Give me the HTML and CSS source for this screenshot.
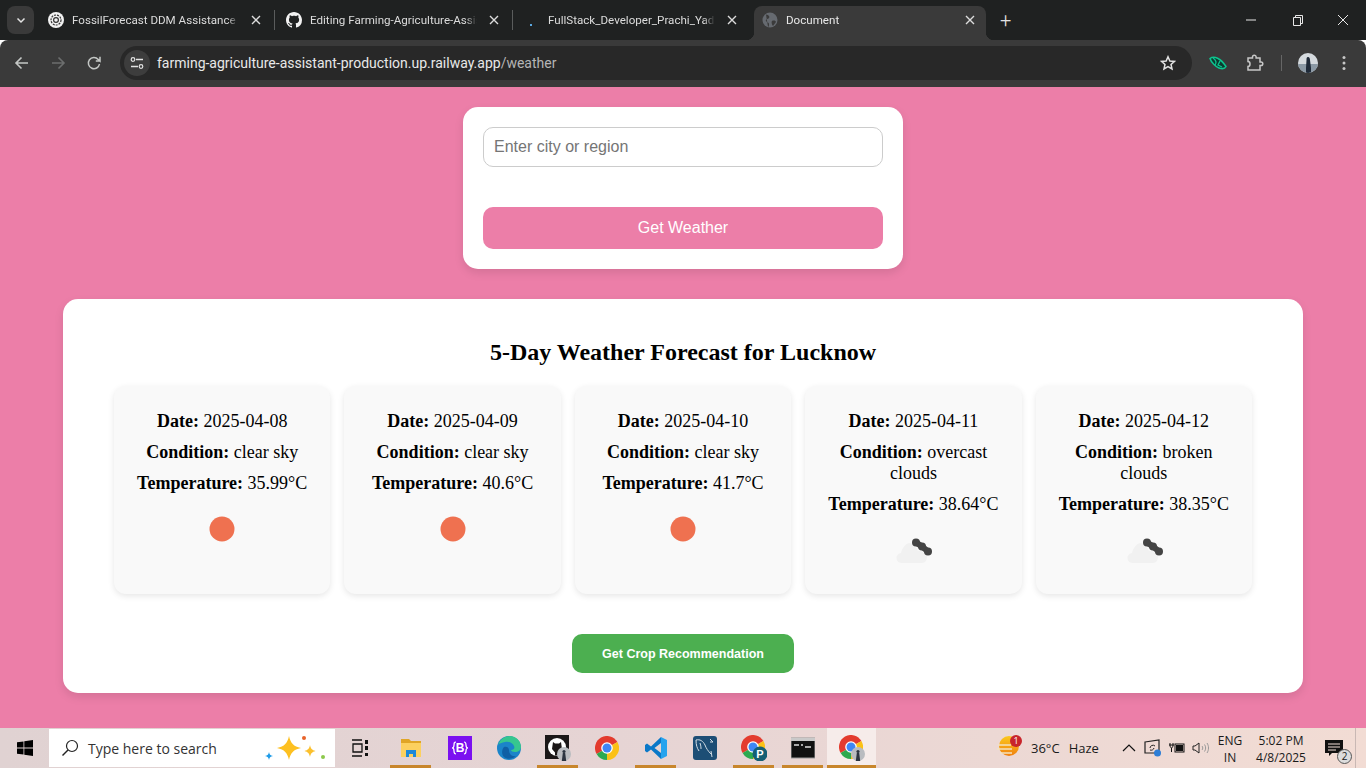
FILE: index.html
```html
<!DOCTYPE html>
<html lang="en">
<head>
    <meta charset="UTF-8">
    <title>Document</title>
    <link rel="stylesheet" href="styles.css">
</head>
<body>
<svg class="defs" width="0" height="0">
    <symbol id="chrome-logo" viewBox="0 0 24 24">
        <path d="M12 12 22.400 6A12 12 0 0 0 1.600 18z" fill="#e33b2e"/>
        <path d="M12 12 1.600 18A12 12 0 0 0 12 24z" fill="#2da94f"/>
        <path d="M12 12V24A12 12 0 0 0 22.400 6z" fill="#fbc116"/>
        <circle cx="12" cy="12" r="5.800" fill="#fff"/>
        <circle cx="12" cy="12" r="4.500" fill="#3f86f4"/>
    </symbol>
    <symbol id="lock-badge" viewBox="0 0 14 14">
        <circle cx="7" cy="7" r="7" fill="#b9bcc0"/>
        <circle cx="7" cy="4.500" r="1.600" fill="#2b3440"/>
        <path d="M5.800 6h2.400l1 8H4.800z" fill="#2b3440"/>
    </symbol>
    <symbol id="close-x" viewBox="0 0 10 10">
        <path d="M1 1l8 8M9 1 1 9" stroke="#dcdcdc" stroke-width="1.400"/>
    </symbol>
    <symbol id="cloud-icon" viewBox="0 0 50 50">
        <path d="M14 38a5 5 0 0 1-1-10c1-5 5-10 9-10 3 0 6 4 8 8 5-1 9 2 9 6 0 3-2 6-5 6z" fill="#f1f1f1"/>
        <path d="M28 17.500 34 21.500 40 26.500" fill="none" stroke="#444" stroke-width="6"/>
        <circle cx="28" cy="17.500" r="4" fill="#444"/>
        <circle cx="34" cy="21.500" r="4" fill="#444"/>
        <circle cx="40" cy="26.500" r="4" fill="#444"/>
    </symbol>
</svg>
<div class="page">
    <!-- browser tabs -->
    <div class="tabstrip">
        <div class="tab-search"><svg width="10" height="10" viewBox="0 0 10 10"><path d="M1.500 3.500 5 7l3.500-3.500" fill="none" stroke="#e3e3e3" stroke-width="1.500"/></svg></div>
        <div class="tab">
            <svg class="favicon" width="16" height="16" viewBox="0 0 16 16"><circle cx="8" cy="8" r="8" fill="#f2f2f2"/><circle cx="8" cy="8" r="5" fill="none" stroke="#333" stroke-width="1.200" stroke-dasharray="2 1"/><circle cx="8" cy="8" r="2.400" fill="none" stroke="#333" stroke-width="1.200"/></svg>
            <span class="tab-title">FossilForecast DDM Assistance</span>
            <svg class="tab-close" width="10" height="10"><use href="#close-x"/></svg>
        </div>
        <div class="tab-sep"></div>
        <div class="tab">
            <svg class="favicon" width="16" height="16" viewBox="0 0 16 16"><path fill="#f2f2f2" d="M8 0C3.580 0 0 3.580 0 8c0 3.540 2.290 6.530 5.470 7.590.4.070.55-.17.55-.38 0-.19-.01-.82-.01-1.490-2.010.37-2.530-.49-2.690-.94-.09-.23-.48-.94-.82-1.130-.28-.15-.68-.52-.01-.53.63-.01 1.080.58 1.230.82.72 1.210 1.870.87 2.330.66.07-.52.28-.87.51-1.070-1.780-.2-3.640-.89-3.640-3.950 0-.87.31-1.590.82-2.150-.08-.2-.36-1.020.08-2.120 0 0 .67-.21 2.200.82.64-.18 1.320-.27 2-.27s1.360.09 2 .27c1.530-1.040 2.200-.82 2.200-.82.44 1.100.16 1.920.08 2.120.51.56.82 1.270.82 2.150 0 3.070-1.870 3.750-3.650 3.950.29.25.54.73.54 1.480 0 1.070-.01 1.930-.01 2.200 0 .21.15.46.55.38A8.010 8.010 0 0 0 16 8c0-4.420-3.580-8-8-8z"/></svg>
            <span class="tab-title">Editing Farming-Agriculture-Assistant</span>
            <svg class="tab-close" width="10" height="10"><use href="#close-x"/></svg>
        </div>
        <div class="tab-sep"></div>
        <div class="tab">
            <svg class="favicon" width="16" height="16" viewBox="0 0 16 16"><rect x="6" y="12" width="2" height="2" fill="#5aa7e0"/></svg>
            <span class="tab-title">FullStack_Developer_Prachi_Yadav</span>
            <svg class="tab-close" width="10" height="10"><use href="#close-x"/></svg>
        </div>
        <div class="tab tab-active">
            <svg class="favicon" width="16" height="16" viewBox="0 0 16 16"><circle cx="8" cy="8" r="7.500" fill="#666a70"/><path d="M4 2.500c3 .5 4 2 3 3.500S3 7 4 9s3 1 3 3 0 2-1 3M10 9c2-1 4 0 4 1l-3 4c-1-1-2-4-1-5z" fill="#3b3b3b"/></svg>
            <span class="tab-title">Document</span>
            <svg class="tab-close" width="10" height="10"><use href="#close-x"/></svg>
        </div>
        <span class="tab-new">+</span>
        <div class="win-controls">
            <svg width="46" height="40" viewBox="0 0 46 40"><path d="M18 20h10" stroke="#e8e8e8"/></svg>
            <svg width="46" height="40" viewBox="0 0 46 40"><path d="M19.500 17.500h7v8h-7zM21.500 17.500v-2h7v8h-2" fill="none" stroke="#e8e8e8"/></svg>
            <svg width="46" height="40" viewBox="0 0 46 40"><path d="M18 15l10 10M28 15 18 25" stroke="#e8e8e8"/></svg>
        </div>
    </div>

    <!-- browser toolbar -->
    <div class="toolbar">
        <svg class="nav-icon" width="16" height="16" viewBox="0 0 16 16"><path d="M14 8H2.500M7.500 2.500 2 8l5.500 5.500" fill="none" stroke="#c4c7c5" stroke-width="1.600"/></svg>
        <svg class="nav-icon" width="16" height="16" viewBox="0 0 16 16"><path d="M2 8h11.500M8.500 2.500 14 8l-5.500 5.500" fill="none" stroke="#6c6e6e" stroke-width="1.600"/></svg>
        <svg class="nav-icon" width="16" height="16" viewBox="0 0 16 16"><path d="M13.500 9a5.600 5.600 0 1 1-1.300-4.600L14 6V1.800M14 6H9.800" fill="none" stroke="#c4c7c5" stroke-width="1.500"/></svg>
        <div class="omnibox">
            <span class="site-btn"><svg width="14" height="14" viewBox="0 0 14 14"><path d="M6 3.500h7M1 10.500h7" stroke="#e3e3e3" stroke-width="1.300"/><circle cx="3" cy="3.500" r="1.800" fill="none" stroke="#e3e3e3" stroke-width="1.200"/><circle cx="11" cy="10.500" r="1.800" fill="none" stroke="#e3e3e3" stroke-width="1.200"/></svg></span>
            <span class="url">farming-agriculture-assistant-production.up.railway.app<span class="url-path">/weather</span></span>
            <svg class="star" width="16" height="16" viewBox="0 0 18 18"><path d="M9 2l2.100 4.700 5.100.5-3.800 3.400 1.100 5L9 13l-4.500 2.600 1.100-5L1.800 7.200l5.100-.5z" fill="none" stroke="#e3e3e3" stroke-width="1.700"/></svg>
        </div>
        <div class="toolbar-right">
            <svg class="ext-leaf" width="18" height="14" viewBox="0 0 18 14"><path d="M1 2.500c2-1.500 5-1.500 8 0s6 5 8 8c-1 2-4 2.500-7 1.500S2 6 1 2.500z" fill="#0b3b30" stroke="#0dc58f" stroke-width="1.500"/><path d="M4 2c3 2 4 5 2 7M11 5 9 9l4 2" fill="none" stroke="#0dc58f" stroke-width="1.300"/></svg>
            <svg class="ext-puzzle" width="18" height="18" viewBox="0 0 18 18"><path d="M2 4h4.500V3a1.800 1.800 0 0 1 3.600 0v1H14v4h1a1.800 1.800 0 0 1 0 3.600h-1V16H2v-3.500c1.500 0 2-1 2-2.500S3.500 7.500 2 7.500z" fill="none" stroke="#c7c7c7" stroke-width="1.500"/></svg>
            <span class="toolbar-div"></span>
            <svg class="avatar" width="20" height="20" viewBox="0 0 20 20"><defs><clipPath id="avatar-clip"><circle cx="10" cy="10" r="10"/></clipPath></defs><g clip-path="url(#avatar-clip)"><rect width="20" height="20" fill="#d5dade"/><rect y="11" width="20" height="9" fill="#8b99a5"/><path d="M10 4c1.500 0 2 1.500 2 3l1 8v5H8v-5l.5-8c0-1.500 0-3 1.500-3z" fill="#1f2a38"/></g></svg>
            <svg class="menu-dots" width="4" height="16" viewBox="0 0 4 16"><circle cx="2" cy="2.500" r="1.500" fill="#c7c7c7"/><circle cx="2" cy="8" r="1.500" fill="#c7c7c7"/><circle cx="2" cy="13.500" r="1.500" fill="#c7c7c7"/></svg>
        </div>
    </div>

    <!-- the page itself -->
    <main class="content">
        <form class="search-box">
            <input class="city-input" type="text" placeholder="Enter city or region">
            <button class="weather-btn" type="button">Get Weather</button>
        </form>
        <section class="forecast">
            <h2>5-Day Weather Forecast for Lucknow</h2>
            <div class="forecast-row">
                <div class="day-card">
                    <p><strong>Date:</strong> 2025-04-08</p>
                    <p><strong>Condition:</strong> clear sky</p>
                    <p><strong>Temperature:</strong> 35.99°C</p>
                    <svg class="wx-icon" width="50" height="50" viewBox="0 0 50 50"><circle cx="25" cy="25" r="12.500" fill="#ef7150"/></svg>
                </div>
                <div class="day-card">
                    <p><strong>Date:</strong> 2025-04-09</p>
                    <p><strong>Condition:</strong> clear sky</p>
                    <p><strong>Temperature:</strong> 40.6°C</p>
                    <svg class="wx-icon" width="50" height="50" viewBox="0 0 50 50"><circle cx="25" cy="25" r="12.500" fill="#ef7150"/></svg>
                </div>
                <div class="day-card">
                    <p><strong>Date:</strong> 2025-04-10</p>
                    <p><strong>Condition:</strong> clear sky</p>
                    <p><strong>Temperature:</strong> 41.7°C</p>
                    <svg class="wx-icon" width="50" height="50" viewBox="0 0 50 50"><circle cx="25" cy="25" r="12.500" fill="#ef7150"/></svg>
                </div>
                <div class="day-card">
                    <p><strong>Date:</strong> 2025-04-11</p>
                    <p><strong>Condition:</strong> overcast clouds</p>
                    <p><strong>Temperature:</strong> 38.64°C</p>
                    <svg class="wx-icon" width="50" height="50"><use href="#cloud-icon"/></svg>
                </div>
                <div class="day-card">
                    <p><strong>Date:</strong> 2025-04-12</p>
                    <p><strong>Condition:</strong> broken clouds</p>
                    <p><strong>Temperature:</strong> 38.35°C</p>
                    <svg class="wx-icon" width="50" height="50"><use href="#cloud-icon"/></svg>
                </div>
            </div>
            <button class="crop-btn" type="button">Get Crop Recommendation</button>
        </section>
    </main>

    <!-- windows taskbar -->
    <div class="taskbar">
        <div class="tb-start"><svg width="16" height="16" viewBox="0 0 16 16"><path d="M0 2.300 6.500 1.400v6.200H0zM7.300 1.300 16 0v7.600H7.300zM0 8.400h6.500v6.200L0 13.700zM7.300 8.400H16V16l-8.700-1.300z" fill="#000"/></svg></div>
        <div class="tb-search">
            <svg width="18" height="18" viewBox="0 0 18 18"><circle cx="11" cy="7" r="5.500" fill="none" stroke="#222" stroke-width="1.200"/><path d="M7 11l-5.500 5.500" stroke="#222" stroke-width="1.400"/></svg>
            <span class="tb-search-text">Type here to search</span>
            <svg class="copilot" width="64" height="30" viewBox="0 0 64 30"><path d="M25 3c1.500 7 4.500 10.500 12 12-7.500 1.500-10.500 5-12 12-1.500-7-4.500-10.500-12-12 7.500-1.500 10.500-5 12-12z" fill="#fdc021"/><path d="M46 12c.7 3.500 2 5 5.500 6-3.500 1-4.800 2.500-5.500 6-.7-3.500-2-5-5.500-6 3.500-1 4.800-2.500 5.500-6z" fill="#fbc02d"/><path d="M5 19c.4 2.500 1.300 3.300 4 4-2.700.7-3.600 1.500-4 4-.4-2.500-1.300-3.300-4-4 2.700-.7 3.600-1.500 4-4z" fill="#1e9be8"/><circle cx="40" cy="5" r="2" fill="#e8632a"/><circle cx="59" cy="24" r="2" fill="#8cc84b"/></svg>
        </div>
        <div class="tb-taskview"><svg width="18" height="18" viewBox="0 0 18 18"><path d="M1 1h10M1 17h10M2 5h9v8H2z" fill="none" stroke="#111" stroke-width="1.300"/><path d="M14 1h3v4h-3zM14 7h3v4h-3zM14 14h3v3h-3z" fill="#111"/></svg></div>
        <div class="tb-app tb-open"><svg width="24" height="24" viewBox="0 0 24 24"><path d="M2 3h8l2 2h10v4H2z" fill="#e0a526"/><path d="M2 7h20v14H2z" fill="#fcd05f"/><path d="M7 14h10v7h-3v-3h-4v3H7z" fill="#1e88d8"/></svg></div>
        <div class="tb-app"><svg width="24" height="24" viewBox="0 0 24 24"><rect width="24" height="24" fill="#7b10f0"/><path d="M8 6c-2 0-2 1-2 3s0 3-2 3c2 0 2 1 2 3s0 3 2 3M16 6c2 0 2 1 2 3s0 3 2 3c-2 0-2 1-2 3s0 3-2 3" fill="none" stroke="#fff" stroke-width="1.200"/><text class="tb-glyph" x="12" y="16" text-anchor="middle">B</text></svg></div>
        <div class="tb-app"><svg width="24" height="24" viewBox="0 0 24 24"><circle cx="12" cy="12" r="12" fill="#1b84c9"/><path d="M1 9C3 3 8 0 13 0c6 0 11 5 11 11 0 3-3 5-6 5-2 0-4-1-4-2 3 0 4-2 3-4-1-3-5-5-9-4-3 1-6 1-7 3z" fill="#36c68f"/><path d="M12 14c0 4 3 7 7 6-3 3-9 4-12 1-3-3-2-8 0-10 2-1 5 0 5 3z" fill="#0f5fa5"/></svg></div>
        <div class="tb-app tb-open"><svg width="26" height="26" viewBox="0 0 26 26"><rect width="24" height="24" fill="#1b1717"/><circle cx="12" cy="12" r="9" fill="#fff"/><path d="M8 7l2 1.500h4L16 7l1 7-3 3.500v3h-4v-3L7 14z" fill="#1b1717"/><use href="#lock-badge" x="12" y="12" width="14" height="14"/></svg></div>
        <div class="tb-app"><svg width="24" height="24"><use href="#chrome-logo"/></svg></div>
        <div class="tb-app tb-open"><svg width="24" height="24" viewBox="0 0 24 24"><path d="M17 1 23 4v16l-6 3z" fill="#26a3ee"/><path d="M17 1 7 10.500 3 7.500 1 9v6l2 1.500 4-3L17 23v-6l-6.500-5L17 7z" fill="#0a78c8"/></svg></div>
        <div class="tb-app"><svg width="24" height="24" viewBox="0 0 24 24"><rect width="24" height="24" rx="3" fill="#1d4e75"/><path d="M3 4c4-1 7 1 9 5 1 3 3 6 6 9M3 4c0 5 1 8 3 11M7 7c1 3 1 5 1 6M17 3l3 3-3 0" fill="none" stroke="#d4dee6" stroke-width="1"/><path d="M18 15l1 6" stroke="#d4dee6"/></svg></div>
        <div class="tb-app tb-open"><svg width="26" height="26" viewBox="0 0 26 26"><use href="#chrome-logo" width="24" height="24"/><circle cx="19" cy="19" r="7.500" fill="#145f74"/><text class="tb-glyph tb-glyph-p" x="19" y="23" text-anchor="middle">P</text></svg></div>
        <div class="tb-app tb-open"><svg width="24" height="22" viewBox="0 0 24 22"><rect y="1" width="24" height="20" fill="#111" stroke="#9a9a9a"/><rect y="1" width="24" height="3" fill="#c9c9c9"/><path d="M3 8h5M10 8h2M14 10h6" stroke="#ddd" stroke-width="1.500"/></svg></div>
        <div class="tb-app tb-open tb-current"><svg width="26" height="26" viewBox="0 0 26 26"><use href="#chrome-logo" width="24" height="24"/><use href="#lock-badge" x="12" y="12" width="14" height="14"/></svg></div>

        <div class="tb-tray">
            <div class="tray-weather">
                <span class="wx-sun"><svg width="22" height="22" viewBox="0 0 22 22"><defs><linearGradient id="sun-grad" x1="0" y1="0" x2="0" y2="1"><stop offset="0" stop-color="#fbc81e"/><stop offset="1" stop-color="#f0800f"/></linearGradient></defs><circle cx="11" cy="9" r="10" fill="url(#sun-grad)"/><path d="M0 8h13M-1 12h15M2 16h12" stroke="#f3e2bf" stroke-width="1.500"/></svg><span class="wx-badge">1</span></span>
                <span class="wx-temp">36°C</span>
                <span>Haze</span>
            </div>
            <div class="tray-icon"><svg width="14" height="8" viewBox="0 0 14 8"><path d="M1 7l6-6 6 6" fill="none" stroke="#111" stroke-width="1.200"/></svg></div>
            <div class="tray-icon"><svg width="18" height="18" viewBox="0 0 18 18"><path d="M1 3l14-2v13H1z" fill="none" stroke="#222" stroke-width="1.200"/><path d="M6 9a3 3 0 0 1 5-2M10 9a3 3 0 0 1-4 2" fill="none" stroke="#222"/><circle cx="13.500" cy="14" r="3.500" fill="#2e7ed6"/></svg></div>
            <div class="tray-icon"><svg width="18" height="14" viewBox="0 0 18 14"><rect x="7" y="3" width="9" height="8" fill="none" stroke="#111"/><rect x="8" y="4" width="7" height="6" fill="#111"/><path d="M1 4h5M2 2v2M5 2v2M3.500 7v4M2 4c0 2 1 3 1.500 3S5 6 5 4" fill="none" stroke="#111"/></svg></div>
            <div class="tray-icon"><svg width="18" height="14" viewBox="0 0 18 14"><path d="M1 5h2l4-3v10l-4-3H1z" fill="none" stroke="#222"/><path d="M10 5c1 1 1 3 0 4M12.500 3.500c1.500 2 1.500 5 0 7M15 2c2 3 2 7 0 10" fill="none" stroke="#999"/></svg></div>
            <div class="tray-text tray-lang"><span>ENG</span><span>IN</span></div>
            <div class="tray-text tray-clock"><span>5:02 PM</span><span>4/8/2025</span></div>
            <div class="tray-notif">
                <svg width="18" height="18" viewBox="0 0 18 18"><path d="M0 1h18v13H7l-3 3v-3H0z" fill="#111"/><path d="M3 5h12M3 8h12M3 11h8" stroke="#f3dfd8"/></svg>
                <span class="notif-count">2</span>
            </div>
            <div class="tb-desktop"></div>
        </div>
    </div>
</div>
</body>
</html>
```

FILE: styles.css
```css
* {
    box-sizing: border-box;
}
html, body {
    margin: 0;
    height: 100%;
    overflow: hidden;
}
body {
    font-family: "Liberation Sans", Arial, sans-serif;
}
.defs {
    display: block;
    height: 0;
}
.page {
    display: flex;
    flex-direction: column;
    width: 1366px;
    height: 768px;
}

/* tabs */
.tabstrip {
    display: flex;
    align-items: flex-end;
    flex: 0 0 40px;
    padding-left: 7px;
    background: #1f2121;
    font-family: Roboto, sans-serif;
    font-size: 11.6px;
    color: #dcdcdc;
}
.tab-search {
    display: flex;
    align-items: center;
    justify-content: center;
    align-self: flex-start;
    width: 27px;
    height: 28px;
    margin: 6px 6px 0 0;
    border-radius: 8px;
    background: #3a3a3a;
}
.tab {
    position: relative;
    display: flex;
    align-items: center;
    width: 232px;
    height: 34px;
    padding: 0 11px 6px 8px;
    gap: 8px;
    flex-shrink: 0;
}
.tab-sep {
    width: 1px;
    height: 20px;
    margin: 0 3px 10px 2px;
    background: #5a5c5c;
    flex-shrink: 0;
}
.tab-title {
    flex: 1;
    margin-right: 4px;
    overflow: hidden;
    white-space: nowrap;
    -webkit-mask-image: linear-gradient(to right, #000 93%, transparent);
}
.tab-close {
    flex-shrink: 0;
}
.tab-active {
    margin-left: 6px;
    border-radius: 8px 8px 0 0;
    background: #3a3a3a;
    color: #e8e8e8;
}
.tab-active::before, .tab-active::after {
    content: "";
    position: absolute;
    bottom: 0;
    width: 8px;
    height: 8px;
}
.tab-active::before {
    left: -8px;
    background: radial-gradient(circle at 0 0, transparent 8px, #3a3a3a 8.5px);
}
.tab-active::after {
    right: -8px;
    background: radial-gradient(circle at 100% 0, transparent 8px, #3a3a3a 8.5px);
}
.tab-new {
    align-self: center;
    margin-left: 14px;
    font-size: 20px;
    font-weight: 300;
    color: #e3e3e3;
}
.win-controls {
    display: flex;
    align-self: flex-start;
    margin-left: auto;
}
.win-controls svg {
    display: block;
}

/* address bar */
.toolbar {
    display: flex;
    align-items: center;
    flex: 0 0 47px;
    padding: 0 0 1px 14px;
    border-radius: 8px 8px 0 0;
    background: #3a3a3a;
}
.nav-icon {
    margin-right: 20px;
}
.omnibox {
    display: flex;
    align-items: center;
    width: 1072px;
    height: 34px;
    margin-left: -2px;
    padding: 0 16px 0 4px;
    border-radius: 17px;
    background: #282828;
    font-family: Roboto, sans-serif;
    font-size: 14px;
    color: #e8e8e8;
}
.site-btn {
    display: flex;
    align-items: center;
    justify-content: center;
    width: 26px;
    height: 26px;
    margin-right: 7px;
    border-radius: 50%;
    background: #3d3d3d;
}
.url-path {
    color: #b5b5b5;
}
.star {
    margin-left: auto;
}
.toolbar-right {
    display: flex;
    align-items: center;
    margin-left: 17px;
}
.ext-puzzle {
    margin-left: 19px;
}
.toolbar-div {
    width: 1px;
    height: 16px;
    margin: 0 16px 0 17px;
    background: #666;
}
.menu-dots {
    margin-left: 24px;
}

/* page content */
.content {
    display: flex;
    flex-direction: column;
    align-items: center;
    flex: 1;
    padding-top: 20px;
    overflow: hidden;
    background: #ec7ea8;
}
.search-box {
    display: flex;
    flex-direction: column;
    width: 440px;
    margin-bottom: 30px;
    padding: 20px;
    border-radius: 15px;
    background: #fff;
    box-shadow: 0 4px 10px rgba(0, 0, 0, 0.1);
}
.city-input {
    height: 40px;
    padding: 0 10px;
    border: 1px solid #ccc;
    border-radius: 10px;
    font-family: "Liberation Sans", Arial, sans-serif;
    font-size: 16px;
}
.weather-btn {
    height: 42px;
    margin-top: 40px;
    border: 0;
    border-radius: 10px;
    background: #ec7ea8;
    color: #fff;
    font-family: "Liberation Sans", Arial, sans-serif;
    font-size: 16px;
}
.forecast {
    display: flex;
    flex-direction: column;
    align-items: center;
    width: 1240px;
    padding: 20px 50px;
    border-radius: 15px;
    background: #fff;
    box-shadow: 0 4px 10px rgba(0, 0, 0, 0.1);
    font-family: "Liberation Serif", "Times New Roman", serif;
    color: #000;
}
.forecast h2 {
    margin: 20px 0;
    font-size: 24px;
}
.forecast-row {
    display: flex;
    gap: 14px;
    width: 100%;
    padding: 0 1px;
}
.day-card {
    flex: 1;
    padding: 15px 15px 19px;
    border-radius: 12px;
    background: #f9f9f9;
    box-shadow: 0 2px 6px rgba(0, 0, 0, 0.1);
    font-size: 18px;
    text-align: center;
}
.day-card p {
    margin: 10px 0;
}
.wx-icon {
    display: block;
    margin: 0 auto;
}
.crop-btn {
    width: 222px;
    height: 39px;
    margin-top: 40px;
    border: 0;
    border-radius: 10px;
    background: #4caf50;
    color: #fff;
    font-family: "Liberation Sans", Arial, sans-serif;
    font-size: 12.5px;
    font-weight: bold;
}

/* taskbar */
.taskbar {
    display: flex;
    align-items: center;
    flex: 0 0 40px;
    background: linear-gradient(to right, #e0d2d2, #e6d4d4 45%, #f2dcd4);
    font-family: "Open Sans", sans-serif;
    font-size: 13px;
    color: #1a1a1a;
}
.tb-start {
    display: flex;
    justify-content: center;
    width: 49px;
}
.tb-search {
    display: flex;
    align-items: center;
    width: 286px;
    height: 38px;
    padding: 0 7px 0 12px;
    background: #fff;
}
.tb-search-text {
    margin-left: 9px;
    font-size: 14px;
    color: #333;
}
.copilot {
    margin-left: auto;
}
.tb-taskview {
    display: flex;
    justify-content: center;
    width: 51px;
    padding-right: 2px;
}
.tb-app {
    position: relative;
    display: flex;
    align-items: center;
    justify-content: center;
    width: 49px;
    height: 40px;
    border-bottom: 3px solid transparent;
}
.tb-app svg {
    margin-top: 2px;
}
.tb-open::after {
    content: "";
    position: absolute;
    left: 4px;
    right: 4px;
    bottom: -3px;
    height: 3px;
    background: #c8862c;
}
.tb-current {
    background: #f6ecea;
}
.tb-current::after {
    left: 0;
    right: 0;
}
.tb-glyph {
    font-family: "Liberation Sans", sans-serif;
    font-size: 12px;
    font-weight: bold;
    fill: #fff;
}
.tb-glyph-p {
    font-size: 11px;
}
.tb-tray {
    display: flex;
    align-items: center;
    height: 40px;
    margin-left: auto;
}
.tray-weather {
    display: flex;
    align-items: center;
    width: 107px;
    margin-right: 12px;
    white-space: nowrap;
}
.wx-sun {
    position: relative;
    display: flex;
    margin-right: 11px;
}
.wx-sun svg {
    overflow: visible;
}
.wx-badge {
    position: absolute;
    top: -2px;
    right: -2px;
    width: 12px;
    height: 12px;
    border-radius: 50%;
    background: #c8252b;
    color: #fff;
    font-size: 9px;
    line-height: 12px;
    text-align: center;
}
.wx-temp {
    margin-right: 9px;
}
.tray-icon {
    display: flex;
    align-items: center;
    justify-content: center;
    width: 24px;
}
.tray-text {
    display: flex;
    flex-direction: column;
    align-items: center;
    padding-top: 2px;
    font-size: 12px;
    line-height: 17px;
}
.tray-lang {
    width: 34px;
}
.tray-clock {
    width: 62px;
    margin-left: 3px;
}
.tray-notif {
    position: relative;
    display: flex;
    align-items: center;
    justify-content: center;
    width: 43px;
    height: 40px;
}
.notif-count {
    position: absolute;
    right: 3px;
    bottom: 4px;
    width: 15px;
    height: 15px;
    border: 1px solid #555;
    border-radius: 50%;
    background: #ddd;
    font-size: 10px;
    line-height: 13px;
    text-align: center;
}
.tb-desktop {
    width: 11px;
    height: 40px;
    border-left: 1px solid #c9b8b4;
}
```
